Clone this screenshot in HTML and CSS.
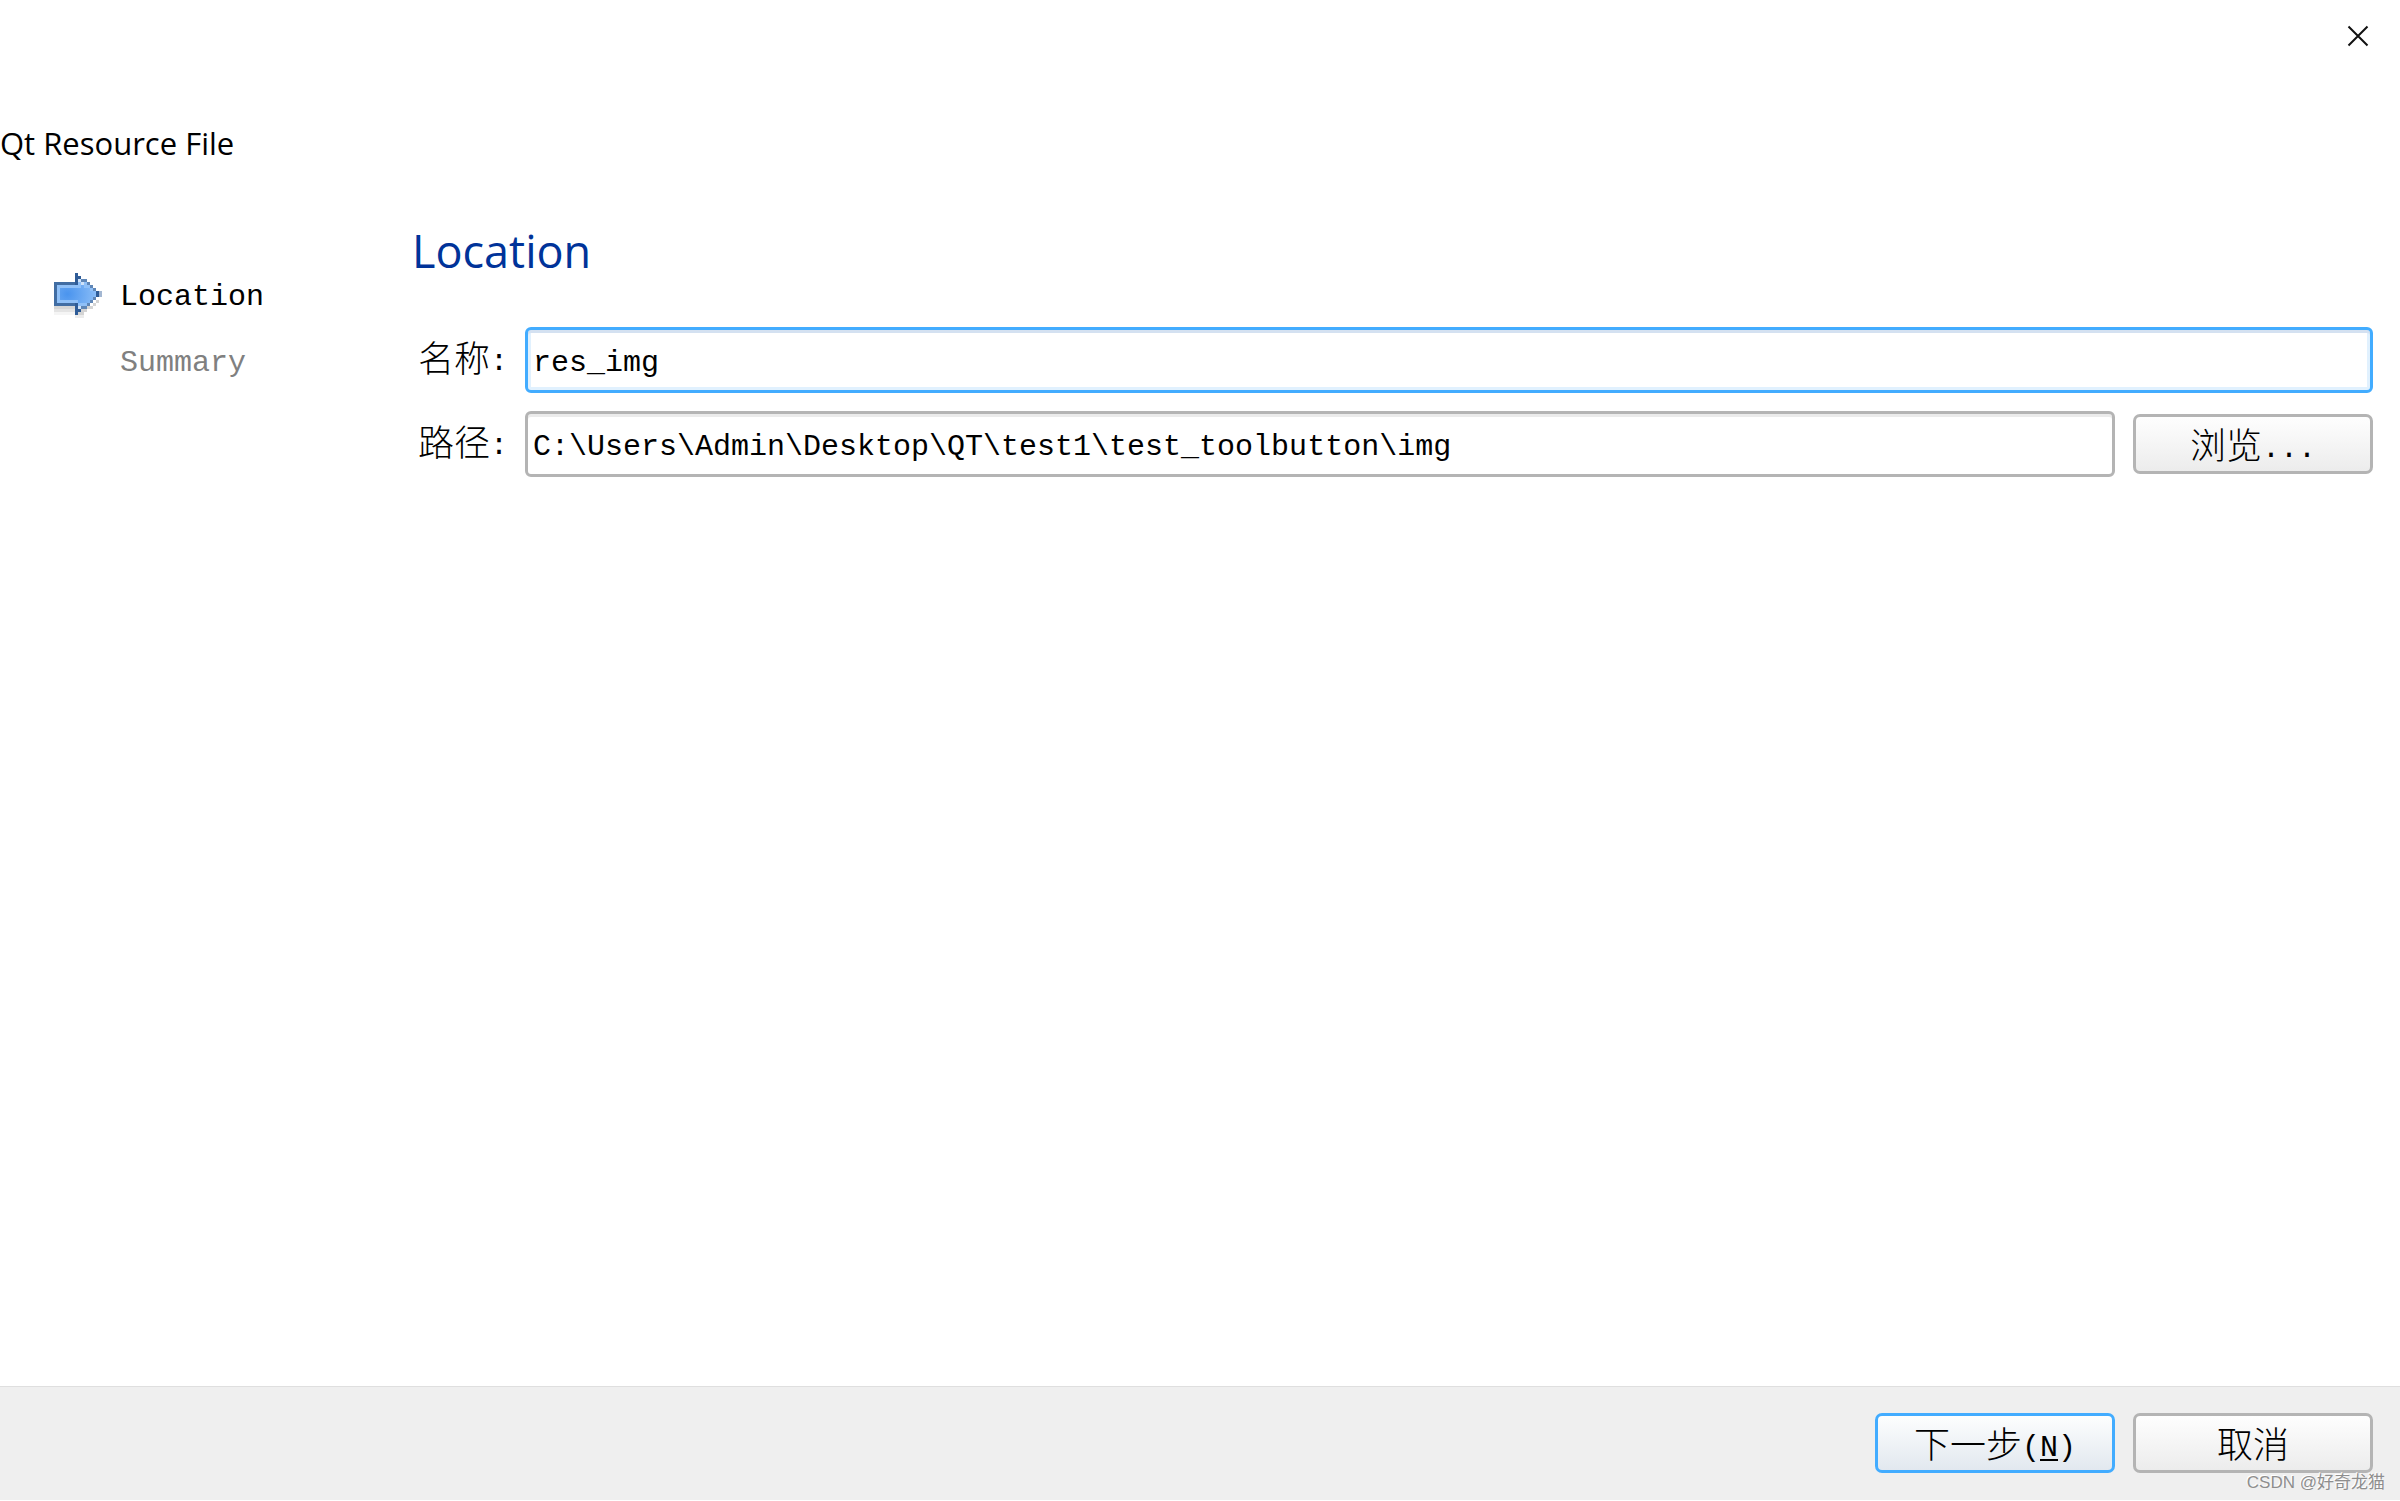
FILE: index.html
```html
<!DOCTYPE html>
<html lang="zh-CN">
<head>
<meta charset="utf-8">
<title>Qt Resource File</title>
<link rel="stylesheet" href="styles.css">
</head>
<body>
<form class="wizard">
  <header class="titlebar">
    <button class="close" type="button" aria-label="Close">
      <svg width="22" height="22" viewBox="0 0 22 22"><path d="M1.5 1.5l19 19M20.500 1.500l-19 19" fill="none" stroke="#111" stroke-width="2"/></svg>
    </button>
  </header>
  <h1 class="title">Qt Resource File</h1>
  <div class="body">
    <ol class="steps">
      <li class="step current">
        <svg class="arrow" width="48" height="48" viewBox="0 0 16 16" shape-rendering="crispEdges" aria-hidden="true">
          <defs>
            <radialGradient id="fill" cx="0.3" cy="0.5" r="0.7">
              <stop offset="0" stop-color="#4a94ee"/><stop offset="1" stop-color="#8fc0f8"/>
            </radialGradient>
          </defs>
          <path d="M0 11h7v1h-7z" fill="#d6d6d6"/>
          <path d="M0 12h7v1h-7z" fill="#e4e4e4"/>
          <path d="M0 13h7v1h-7z" fill="#f5f5f5"/>
          <path d="M8 13h1v-1h2v-1h2v-1h1v-1h1v1h-1v1h-1v1h-2v1h-1v1h-3v-1z" fill="#d4d4d4"/>
          <path d="M7 14h3v1h-3z" fill="#ececec"/>
          <path d="M0 3h7v-3h1v1h1v1h2v1h1v1h1v1h1v1h1v2h-1v1h-1v1h-1v1h-1v1h-2v1h-1v1h-1v-3h-7z" fill="url(#fill)"/>
          <path d="M1 4h7v-2h1v1h2v1h1v1h1v1h-1v-1h-2v-1h-1v1h-7v4h6v1h-7zM8 10h3v1h-2v1h-1z" fill="#8fc0f8"/>
          <path d="M8 2h1v1h-1zM9 3h1v1h-1zM8 11h1v1h-1z" fill="#cfe2f8"/>
          <path d="M0 3h8v1h-7v6h7v1h-8z" fill="#416da3"/>
          <path d="M7 0h1v4h-1zM7 10h1v4h-1zM8 1h1v1h-1zM8 12h1v1h-1zM14 6h1v2h-1z" fill="#2f5c97"/>
          <path d="M9 2h1v1h-1zM10 2h1v1h-1zM11 3h1v1h-1zM12 4h1v1h-1zM13 5h1v1h-1zM13 8h1v1h-1zM12 9h1v1h-1zM11 10h1v1h-1zM9 11h2v1h-2z" fill="#5f86b6"/>
          <path d="M15 6h1v2h-1z" fill="#a3b7d2"/>
        </svg>
        <span>Location</span>
      </li>
      <li class="step">Summary</li>
    </ol>
    <main class="page">
      <h2 class="heading">Location</h2>
      <div class="fields">
        <label class="label" for="name">名称<span class="latin">:</span></label>
        <input class="input focused" id="name" type="text" value="res_img">
        <label class="label" for="path">路径<span class="latin">:</span></label>
        <div class="path-row">
          <input class="input" id="path" type="text" value="C:\Users\Admin\Desktop\QT\test1\test_toolbutton\img">
          <button class="button" type="button">浏览<span class="latin">...</span></button>
        </div>
      </div>
    </main>
  </div>
  <footer class="footer">
    <button class="button primary" type="button">下一步<span class="latin">(<u>N</u>)</span></button>
    <button class="button" type="button">取消</button>
    <span class="watermark">CSDN @好奇龙猫</span>
  </footer>
</form>
</body>
</html>
```
FILE: styles.css
```css
* { box-sizing: border-box; }

body {
  margin: 0;
  background: #fff;
  color: #000;
  font-family: "Liberation Mono", "Noto Sans CJK SC", monospace;
  font-size: 30px;
}

.wizard {
  display: flex;
  flex-direction: column;
  min-height: 100vh;
  padding-bottom: 1px;
}

.titlebar {
  display: flex;
  justify-content: flex-end;
  height: 72px;
}

.close {
  display: flex;
  align-items: center;
  justify-content: center;
  width: 84px;
  height: 72px;
  padding: 0;
  border: 0;
  background: none;
}

.title {
  margin: 47px 0 0;
  font: 400 31px/48px "Open Sans", "Noto Sans", sans-serif;
}

.body {
  display: flex;
  flex: 1;
  padding-right: 27px;
}

.steps {
  width: 412px;
  margin: 0;
  padding: 97px 0 0 54px;
  list-style: none;
}

.step {
  display: flex;
  align-items: center;
  gap: 18px;
  height: 66px;
  padding-left: 66px;
  color: #808080;
}

.step.current {
  padding-left: 0;
  color: #000;
}

.page {
  flex: 1;
  padding-top: 52px;
}

.heading {
  margin: 0;
  color: #003399;
  font: 400 45px/64px "Open Sans", "Noto Sans", sans-serif;
}

.fields {
  display: grid;
  grid-template-columns: 107px 1fr;
  gap: 18px 6px;
  align-items: center;
  margin-top: 44px;
}

.label {
  padding: 0 0 8px 6px;
  font: 300 36px/52px "Noto Sans CJK SC", sans-serif;
}

.path-row {
  display: flex;
  align-items: center;
  gap: 18px;
}

.input {
  flex: 1;
  width: 100%;
  min-width: 0;
  height: 66px;
  padding: 5px 5px 0;
  border: 3px solid #b4b4b4;
  border-radius: 6px;
  background: #fff;
  box-shadow: inset 0 3px #ebebeb;
  color: #000;
  font: inherit;
  outline: 0;
}

.input.focused {
  border-color: #42acff;
  box-shadow: inset 0 3px #d4e1f1, inset 0 0 0 3px #e1f1fe;
}

.button {
  width: 240px;
  height: 60px;
  padding: 0 0 2px;
  border: 3px solid #b4b4b4;
  border-radius: 7px;
  background: linear-gradient(#fefefe, #ececec);
  color: #000;
  font: 300 36px/50px "Noto Sans CJK SC", sans-serif;
}

.button.primary {
  border-color: #42acff;
  background: linear-gradient(#fdfefe, #e2e8ef);
}

.latin {
  font-family: "Liberation Mono", monospace;
  font-size: 30px;
  line-height: 30px;
  vertical-align: 2px;
}

.latin u {
  text-decoration-thickness: 2px;
  text-underline-offset: 3px;
}

.footer {
  position: relative;
  display: flex;
  justify-content: flex-end;
  gap: 18px;
  height: 114px;
  padding: 26px 27px 0;
  border-top: 1px solid #dfdfdf;
  background: #efefef;
}

.watermark {
  position: absolute;
  right: 15px;
  bottom: 4px;
  color: #8e8e8e;
  font: 400 17px/26px "Liberation Sans", "Noto Sans CJK SC", sans-serif;
  text-shadow: -1px -1px #fff;
}
```
